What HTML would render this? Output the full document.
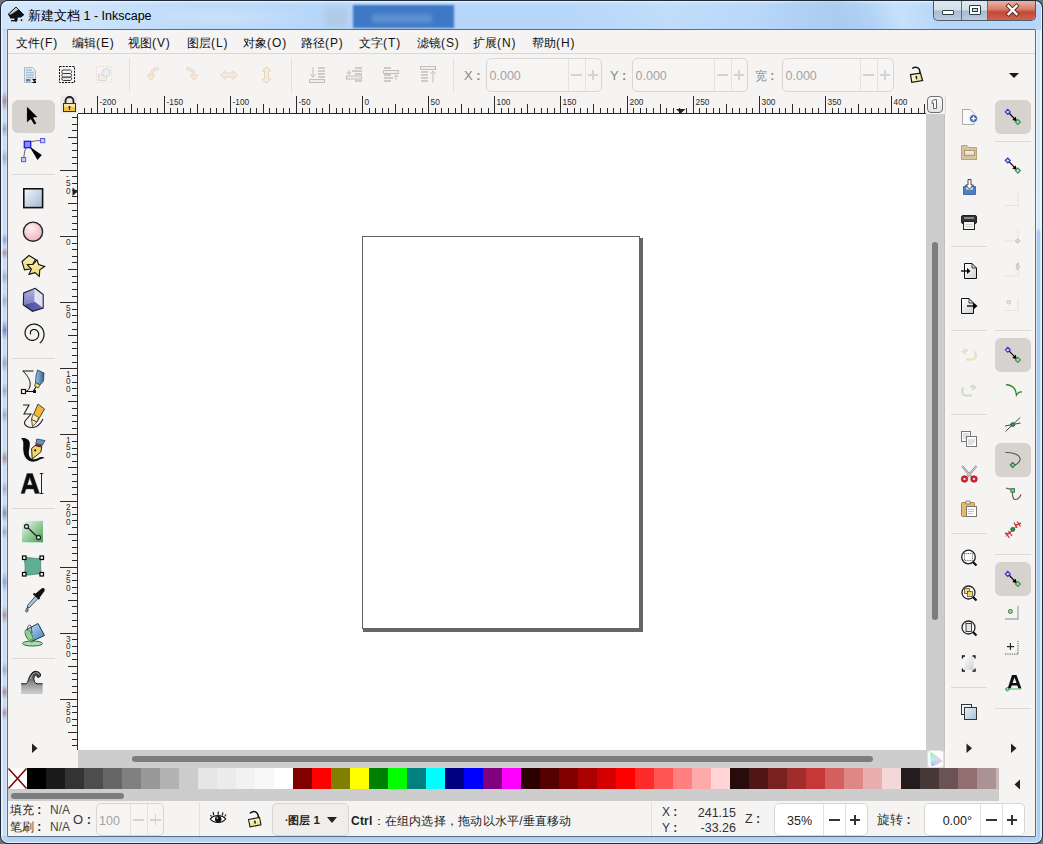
<!DOCTYPE html>
<html><head><meta charset="utf-8">
<style>
*{margin:0;padding:0;box-sizing:border-box}
html,body{width:1043px;height:844px;overflow:hidden;background:#fff;font-family:"Liberation Sans",sans-serif}
.a{position:absolute}
svg.a{overflow:visible}
.cjk{font-family:"Liberation Sans",sans-serif}
.sep{position:absolute;background:#e2e0dc}
.spin{position:absolute;border:1px solid #d9d7d3;border-radius:5px;background:#f6f5f4}
.spin .t{position:absolute;font-size:12.5px;color:#a3a3a3;white-space:nowrap}
.spin .d{position:absolute;top:0;bottom:0;width:1px;background:#e4e2df}
.spin .mi{position:absolute;height:2px;width:11px;background:#d4d4d4}
.lbl{position:absolute;font-size:13px;color:#888;white-space:nowrap}
.menu{position:absolute;top:34.5px;font-size:12px;color:#111;white-space:nowrap;letter-spacing:0}
.btnsel{position:absolute;background:#d6d2ce;border-radius:6px}
.tri{position:absolute;width:0;height:0}

</style></head><body>
<div class="a" style="left:0;top:0;width:1043px;height:844px;background:#6d7680"></div>
<div class="a" style="left:0;top:0;width:1043px;height:844px;border-radius:8px;background:#1f2a36"></div>
<div class="a" style="left:1px;top:1px;width:1041px;height:842px;border-radius:7px;background:#e6f2fd"></div>
<div class="a" style="left:2px;top:2px;width:1039px;height:840px;border-radius:6px;background:linear-gradient(180deg,#c8e2fc 0px,#b7d7fa 3px,#b5d5f9 28px,#b9d6f6 200px,#b3d0f0 500px,#b6d4f6 844px)"></div>
<!-- title streaks -->
<div class="a" style="left:1px;top:1px;width:200px;height:28px;border-radius:7px 0 0 0;background:linear-gradient(90deg,rgba(230,242,253,.6) 0,rgba(230,242,253,.45) 50%,rgba(230,242,253,0) 100%)"></div>
<div class="a" style="left:120px;top:1px;width:200px;height:28px;background:radial-gradient(ellipse at 50% 60%,rgba(220,235,250,.55),rgba(220,235,250,0) 70%)"></div>
<div class="a" style="left:760px;top:1px;width:175px;height:28px;background:linear-gradient(70deg,rgba(200,225,250,0) 0%,rgba(160,195,232,.55) 45%,rgba(160,195,232,.2) 62%,rgba(215,235,252,.5) 78%,rgba(200,225,250,0) 100%)"></div>
<div class="a" style="left:560px;top:1px;width:220px;height:28px;background:linear-gradient(90deg,rgba(210,232,252,0),rgba(210,232,252,.35) 50%,rgba(210,232,252,0))"></div>
<div class="a" style="left:353px;top:5px;width:101px;height:23px;background:#3f78c6;filter:blur(1.2px)"></div>
<div class="a" style="left:372px;top:14px;width:60px;height:9px;background:rgba(120,165,220,.55);filter:blur(2px)"></div>
<div class="a" style="left:325px;top:8px;width:22px;height:18px;background:rgba(170,190,210,.5);filter:blur(3px)"></div>
<!-- left frame streaks -->
<div class="a" style="left:2px;top:30px;width:5px;height:806px;background:linear-gradient(180deg,#c6ddf5 0px,#c6ddf5 61px,#a38fa8 71px,#c6ddf5 81px,#c6ddf5 91px,#98aac4 99px,#c6ddf5 107px,#c6ddf5 119px,#9fb3cf 128px,#c6ddf5 137px,#c6ddf5 203px,#8fa9dc 210px,#c6ddf5 217px,#c6ddf5 217px,#a896b0 223px,#c6ddf5 229px,#c6ddf5 239px,#a0b2c8 247px,#c6ddf5 255px,#c6ddf5 263px,#a3b5cc 271px,#c6ddf5 279px,#c6ddf5 290px,#7b88cc 300px,#c6ddf5 310px,#c6ddf5 324px,#98abc8 333px,#c6ddf5 342px,#c6ddf5 353px,#9fb1c6 361px,#c6ddf5 369px,#c6ddf5 377px,#9aaed0 385px,#c6ddf5 393px,#c6ddf5 420px,#a994a8 428px,#c6ddf5 436px,#c6ddf5 451px,#a3b4c8 459px,#c6ddf5 467px,#c6ddf5 474px,#8797b0 483px,#c6ddf5 492px,#c6ddf5 495px,#9fb0c6 502px,#c6ddf5 509px,#c6ddf5 542px,#8ea4dc 552px,#c6ddf5 562px,#c6ddf5 576px,#a898b0 585px,#c6ddf5 594px,#c6ddf5 632px,#9db0cc 640px,#c6ddf5 648px,#c6ddf5 655px,#a48ea8 662px,#c6ddf5 669px,#c6ddf5 676px,#a898b4 683px,#c6ddf5 690px,#c6ddf5 806px)"></div>
<div class="a" style="left:2px;top:30px;width:1px;height:806px;background:rgba(255,255,255,.45)"></div>
<div class="a" style="left:6px;top:30px;width:1px;height:806px;background:rgba(255,255,255,.35)"></div>
<div class="a" style="left:1036px;top:30px;width:5px;height:806px;background:linear-gradient(180deg,#d6e8f9 0,#d8e9f9 198px,#abcbee 202px,#aecdef 100%)"></div>
<div class="a" style="left:1036px;top:30px;width:1px;height:806px;background:rgba(255,255,255,.5)"></div>
<div class="a" style="left:1040px;top:30px;width:1px;height:806px;background:rgba(255,255,255,.55)"></div>
<div class="a" style="left:8px;top:837px;width:1027px;height:5px;background:linear-gradient(180deg,#a8cdf5,#b9d8f8)"></div>
<!-- client border -->
<div class="a" style="left:7px;top:29px;width:1029px;height:808px;border:1px solid #5d6f82;border-radius:1px"></div>
<div class="a" style="left:8px;top:30px;width:1027px;height:806px;background:#f5f4f3"></div>
<!-- title icon -->
<svg class="a" style="left:0;top:0" width="30" height="30" viewBox="0 0 30 30">
<path d="M8 14.5 L16 7 L24 15 L21 17.5 L10 17.5 Z" fill="#111"/>
<path d="M8.5 14.2 L16 7.2 L18.5 9.6 L14 12.5 L11 14.5 Z" fill="#e8e8e8" opacity="0.85"/>
<path d="M8 14.5 L16 7 L24 15" fill="none" stroke="#000" stroke-width="0.8"/>
<path d="M14 15 L18 15 L17.5 20 C17 22.5 15 22.5 14.5 20 Z" fill="#111"/>
<rect x="10" y="17" width="5" height="1.5" fill="#111"/>
<rect x="11" y="20" width="4" height="1.3" fill="#111"/>
<circle cx="21.5" cy="20.2" r="0.9" fill="#111"/>
</svg>
<div class="a cjk" style="left:28px;top:8px;font-size:12.5px;color:#000;white-space:nowrap">新建文档 1 - Inkscape</div>
<!-- caption buttons -->
<div class="a" style="left:933px;top:1px;width:103px;height:20px;border:1px solid #4d5b6a;border-top:none;border-radius:0 0 5px 5px;background:linear-gradient(180deg,#dfe8f1 0,#d3dfeb 45%,#a9bcd0 55%,#bccbdc 100%);overflow:hidden">
 <div class="a" style="left:27px;top:0;width:1px;height:20px;background:#5c6b7b"></div>
 <div class="a" style="left:53px;top:0;width:1px;height:20px;background:#5c6b7b"></div>
 <div class="a" style="left:54px;top:0;width:48px;height:20px;background:linear-gradient(180deg,#eab3a6 0,#d8816f 40%,#c44a35 55%,#d26550 100%)"></div>
</div>
<div class="a" style="left:942px;top:10px;width:12px;height:5px;background:#fff;border:1px solid #2d3a48;border-radius:1px"></div>
<div class="a" style="left:969px;top:5px;width:12px;height:10px;background:#fff;border:1px solid #2d3a48;border-radius:1px"></div>
<div class="a" style="left:972px;top:8px;width:6px;height:4px;background:#c9d6e3;border:1px solid #2d3a48"></div>
<svg class="a" style="left:1005px;top:4px" width="15" height="12" viewBox="0 0 15 12"><path d="M3.5 2 L11.5 10 M11.5 2 L3.5 10" stroke="#5a2a22" stroke-width="4.2" stroke-linecap="square"/><path d="M3.5 2 L11.5 10 M11.5 2 L3.5 10" stroke="#fff" stroke-width="2.4" stroke-linecap="square"/></svg>
<div class="menu cjk" style="left:16px">文件<span style="letter-spacing:0.9px">(F)</span></div>
<div class="menu cjk" style="left:72px">编辑<span style="letter-spacing:0.9px">(E)</span></div>
<div class="menu cjk" style="left:128px">视图<span style="letter-spacing:0.9px">(V)</span></div>
<div class="menu cjk" style="left:187px">图层<span style="letter-spacing:0.9px">(L)</span></div>
<div class="menu cjk" style="left:243px">对象<span style="letter-spacing:0.9px">(O)</span></div>
<div class="menu cjk" style="left:301px">路径<span style="letter-spacing:0.9px">(P)</span></div>
<div class="menu cjk" style="left:359px">文字<span style="letter-spacing:0.9px">(T)</span></div>
<div class="menu cjk" style="left:417px">滤镜<span style="letter-spacing:0.9px">(S)</span></div>
<div class="menu cjk" style="left:473px">扩展<span style="letter-spacing:0.9px">(N)</span></div>
<div class="menu cjk" style="left:532px">帮助<span style="letter-spacing:0.9px">(H)</span></div>
<div class="sep" style="left:8px;top:53px;width:1027px;height:1px;background:#dad8d4"></div>
<!-- toolbar icons -->
<svg class="a" style="left:24px;top:66px" width="14" height="18" viewBox="0 0 14 18">
<path d="M0.5 1.5 L8.5 1.5 L11.5 4.5 L11.5 16.5 L0.5 16.5 Z" fill="#e6ecf4" stroke="#a8b8cc"/>
<path d="M2 4h6 M2 6.5h8 M2 9h8 M2 11.5h8" stroke="#a9bedb" stroke-width="1.3"/>
<rect x="2" y="13" width="4.5" height="2.5" fill="#6f7d8d"/>
<path d="M8.5 13.5 h3.5 M8.5 16.5 h3.5 M9.5 14 L11.5 16" stroke="#000" stroke-width="1.2"/>
</svg>
<svg class="a" style="left:59px;top:66px" width="17" height="18" viewBox="0 0 17 18">
<rect x="0.5" y="0.5" width="15" height="16" fill="none" stroke="#000" stroke-dasharray="2 1.2"/>
<path d="M3.5 11 L10.5 11 C12.5 11 13 12.5 12.5 13.5 L11.5 14.5 L4.5 14.5 C3 14.5 2.5 13 3 12 Z" fill="#e8e8e8" stroke="#222" stroke-width="0.9"/>
<path d="M3.5 7.5 L10.5 7.5 C12.5 7.5 13 9 12.5 10 L11.5 11 L4.5 11 C3 11 2.5 9.5 3 8.5 Z" fill="#f2f2f2" stroke="#222" stroke-width="0.9"/>
<path d="M3.5 4 L10.5 4 C12.5 4 13 5.5 12.5 6.5 L11.5 7.5 L4.5 7.5 C3 7.5 2.5 6 3 5 Z" fill="#fafafa" stroke="#222" stroke-width="0.9"/>
</svg>
<svg class="a" style="left:96px;top:66px" width="17" height="18" viewBox="0 0 17 18" opacity="0.35">
<rect x="0.5" y="0.5" width="15" height="16" fill="none" stroke="#e39a9a" stroke-dasharray="1.5 1.5"/>
<rect x="2.5" y="8.5" width="8" height="6" fill="#f0e2b0" stroke="#aaa"/>
<circle cx="10" cy="6.5" r="4" fill="#dce8f0" stroke="#999"/>
</svg>
<div class="sep" style="left:129px;top:58px;width:1px;height:34px"></div>
<svg class="a" style="left:146px;top:67px" width="15" height="15" viewBox="0 0 15 15" opacity="0.4">
<path d="M13 1.5 C7 1.5 5 5 5 9" stroke="#d9a46f" stroke-width="3" fill="none"/>
<path d="M13 1.5 C7 1.5 5 5 5 9" stroke="#fbeee0" stroke-width="1.2" fill="none"/>
<path d="M1 8 L9 8 L5 13.5 Z" fill="#f3dcc4" stroke="#d9a46f" stroke-width="0.9"/>
</svg>
<svg class="a" style="left:184px;top:67px" width="15" height="15" viewBox="0 0 15 15" opacity="0.4">
<path d="M2 1.5 C8 1.5 10 5 10 9" stroke="#d9a46f" stroke-width="3" fill="none"/>
<path d="M2 1.5 C8 1.5 10 5 10 9" stroke="#fbeee0" stroke-width="1.2" fill="none"/>
<path d="M14 8 L6 8 L10 13.5 Z" fill="#f3dcc4" stroke="#d9a46f" stroke-width="0.9"/>
</svg>
<svg class="a" style="left:220px;top:70px" width="19" height="10" viewBox="0 0 19 10" opacity="0.4">
<path d="M0.5 5 L5 0.5 L5 3 L13 3 L13 0.5 L17.5 5 L13 9.5 L13 7 L5 7 L5 9.5 Z" fill="#f3dcc4" stroke="#d9a46f"/>
</svg>
<svg class="a" style="left:261px;top:66px" width="11" height="18" viewBox="0 0 11 18" opacity="0.4">
<path d="M5.5 0.5 L10 5 L7.5 5 L7.5 13 L10 13 L5.5 17.5 L1 13 L3.5 13 L3.5 5 L1 5 Z" fill="#f3dcc4" stroke="#d9a46f"/>
</svg>
<div class="sep" style="left:291px;top:58px;width:1px;height:34px"></div>
<svg class="a" style="left:309px;top:66px" width="17" height="17" viewBox="0 0 17 17" opacity="0.42">
<path d="M4 1 V10" stroke="#777" stroke-width="1"/><path d="M1.5 8 L4 11.5 L6.5 8" stroke="#777" fill="none"/>
<path d="M9 2h7 M9 5h7 M9 8h7 M9 11h7" stroke="#777" stroke-width="1.6"/>
<rect x="0.5" y="13.5" width="15" height="3" fill="#eee8c8" stroke="#777"/>
</svg>
<svg class="a" style="left:346px;top:66px" width="17" height="17" viewBox="0 0 17 17" opacity="0.42">
<path d="M9 2h7 M6 5h10 M9 8h7 M9 15h7" stroke="#777" stroke-width="1.6"/>
<path d="M3 4 V8" stroke="#777"/><path d="M1 6 L3 8.5 L5 6" stroke="#777" fill="none"/>
<rect x="0.5" y="10" width="15" height="3" fill="#eee8c8" stroke="#777"/>
</svg>
<svg class="a" style="left:383px;top:66px" width="17" height="17" viewBox="0 0 17 17" opacity="0.42">
<path d="M1 2h7 M1 9h7 M1 12h9 M1 15h7" stroke="#777" stroke-width="1.6"/>
<rect x="0.5" y="4.5" width="15" height="3" fill="#eee8c8" stroke="#777"/>
<path d="M13 14 V9" stroke="#777"/><path d="M11 11 L13 8.5 L15 11" stroke="#777" fill="none"/>
</svg>
<svg class="a" style="left:420px;top:66px" width="17" height="17" viewBox="0 0 17 17" opacity="0.42">
<rect x="0.5" y="0.5" width="15" height="3" fill="#eee8c8" stroke="#777"/>
<path d="M1 6h7 M1 9h7 M1 12h7 M1 15h7" stroke="#777" stroke-width="1.6"/>
<path d="M13 16.5 V6" stroke="#777"/><path d="M10.5 8 L13 5 L15.5 8" stroke="#777" fill="none"/>
</svg>
<div class="sep" style="left:453px;top:58px;width:1px;height:34px"></div>
<div class="lbl" style="left:464px;top:68px">X <b>:</b></div>
<div class="spin" style="left:486px;top:58px;width:116px;height:34px"><div class="t" style="left:2.5px;top:10px">0.000</div><div class="d" style="left:81px"></div><div class="d" style="left:98px"></div><div class="mi" style="left:84px;top:15px;width:11px;height:2px"></div><div class="mi" style="left:101px;top:15px;width:10px;height:2px"></div><div class="mi" style="left:105px;top:11px;width:2px;height:10px"></div></div>
<div class="lbl" style="left:610px;top:68px">Y <b>:</b></div>
<div class="spin" style="left:632px;top:58px;width:116px;height:34px"><div class="t" style="left:2.5px;top:10px">0.000</div><div class="d" style="left:81px"></div><div class="d" style="left:98px"></div><div class="mi" style="left:84px;top:15px;width:11px;height:2px"></div><div class="mi" style="left:101px;top:15px;width:10px;height:2px"></div><div class="mi" style="left:105px;top:11px;width:2px;height:10px"></div></div>
<div class="lbl cjk" style="left:755px;top:68px;font-size:12px">宽 <b style="font-weight:bold">:</b></div>
<div class="spin" style="left:782px;top:58px;width:112px;height:34px"><div class="t" style="left:2.5px;top:10px">0.000</div><div class="d" style="left:77px"></div><div class="d" style="left:94px"></div><div class="mi" style="left:80px;top:15px;width:11px;height:2px"></div><div class="mi" style="left:97px;top:15px;width:10px;height:2px"></div><div class="mi" style="left:101px;top:11px;width:2px;height:10px"></div></div>
<svg class="a" style="left:0;top:0" width="1043" height="100" viewBox="0 0 1043 100">
<defs><linearGradient id="gLk" x1="0" y1="0" x2="1" y2="0"><stop offset="0" stop-color="#fbf8e0"/><stop offset="1" stop-color="#ecdf78"/></linearGradient></defs>
<path d="M912.3 68.6 C913.5 67 917 66.6 918.8 68.5 C920 69.8 920 72 920.2 74" stroke="#111" stroke-width="1.5" fill="none"/>
<path d="M910.5 74.6 L920.5 73.2 L922.6 80.6 L911.8 82.4 Z" fill="url(#gLk)" stroke="#111" stroke-width="1.2"/>
<circle cx="916.3" cy="77" r="1" fill="#111"/><path d="M916.4 77.3 L916.8 79.3" stroke="#111" stroke-width="1.1"/>
</svg>
<div class="tri" style="left:1009px;top:73px;border-left:5px solid transparent;border-right:5px solid transparent;border-top:5px solid #1a1a1a"></div>
<div class="a" style="left:78px;top:114px;width:848px;height:636px;background:#fff"></div>
<!-- page -->
<div class="a" style="left:362px;top:236px;width:278px;height:393px;border:1px solid #636363;background:#fff"></div>
<div class="a" style="left:640px;top:238px;width:3px;height:394px;background:#676767"></div>
<div class="a" style="left:363px;top:629px;width:280px;height:3px;background:#676767"></div>
<!-- v scrollbar -->
<div class="a" style="left:926px;top:114px;width:19px;height:636px;background:#cdcdcd"></div>
<div class="a" style="left:944px;top:114px;width:1px;height:636px;background:#c3c1bd"></div>
<div class="a" style="left:945px;top:96px;width:4px;height:672px;background:#f8f7f4"></div>
<div class="a" style="left:932px;top:242px;width:6px;height:378px;background:#7b7e7e;border-radius:3px"></div>
<!-- h scrollbar -->
<div class="a" style="left:78px;top:750px;width:848px;height:18px;background:#cdcdcd"></div>
<div class="a" style="left:132px;top:756px;width:741px;height:6px;background:#7b7e7e;border-radius:3px"></div>
<div class="a" style="left:926px;top:750px;width:19px;height:18px;background:#cdcdcd"></div>
<div class="a" style="left:927px;top:750px;width:17px;height:18px;background:#fcfcfc;border-radius:4px;box-shadow:inset 0 0 0 1px #e2dcdc"></div>
<svg class="a" style="left:927px;top:750px" width="17" height="18" viewBox="0 0 17 18">
<defs><linearGradient id="gCM" x1="0" y1="0" x2="1" y2="1"><stop offset="0" stop-color="#9be6a0"/><stop offset="0.5" stop-color="#b9c8f0"/><stop offset="1" stop-color="#f0b0d0"/></linearGradient></defs>
<defs><linearGradient id="gCM2" x1="0" y1="0" x2="0" y2="1"><stop offset="0" stop-color="#a8f0b0"/><stop offset="0.55" stop-color="#b8eef0"/><stop offset="1" stop-color="#a9b4f4"/></linearGradient><linearGradient id="gCM3" x1="0" y1="0" x2="1" y2="0"><stop offset="0.3" stop-color="#ffc0e8" stop-opacity="0"/><stop offset="1" stop-color="#ffb8d8" stop-opacity="1"/></linearGradient></defs><path d="M3 2.5 C3.5 2 4.5 2 5 2.5 L15 10.5 C15.5 11 15.3 11.6 14.8 11.8 L6 16 C5 16.4 4 16 4 15 Z" fill="url(#gCM2)"/><path d="M3 2.5 C3.5 2 4.5 2 5 2.5 L15 10.5 C15.5 11 15.3 11.6 14.8 11.8 L6 16 C5 16.4 4 16 4 15 Z" fill="url(#gCM3)"/>
</svg>
<!-- ruler corner lock -->
<div class="a" style="left:61px;top:96px;width:16px;height:17px;background:#ebe9e6;border-radius:3px;box-shadow:0 0 1px #ccc"></div>
<svg class="a" style="left:62px;top:96px" width="15" height="17" viewBox="0 0 15 17">
<path d="M3.5 8 V5 A4 4 0 0 1 11.5 5 V8" stroke="#222" stroke-width="1.8" fill="none"/>
<rect x="1.5" y="7.5" width="12" height="8" fill="#f3c445" stroke="#333" stroke-width="1"/>
<rect x="2" y="8" width="11" height="3" fill="#fbe79c"/>
<circle cx="7.5" cy="11" r="1.1" fill="#222"/><rect x="7" y="11" width="1" height="3" fill="#222"/>
</svg>
<!-- page num button at ruler end -->
<div class="a" style="left:927px;top:96px;width:16px;height:17px;background:linear-gradient(180deg,#fafafa,#e4e4e4);border:1px solid #6f6f6f;border-radius:4px"></div>
<svg class="a" style="left:927px;top:96px" width="16" height="17" viewBox="0 0 16 17"><path d="M6.5 4 L9.5 3.5 L9.5 12.5 L6.5 12.5 L6.5 7 L5 7.5 L5 5 Z" fill="#fdfdfd" stroke="#666" stroke-width="1"/></svg>
<div class="a" style="left:945px;top:96px;width:1px;height:18px;background:#e0dedb"></div>
<svg class="a" style="left:0;top:0" width="1043" height="844" viewBox="0 0 1043 844" shape-rendering="crispEdges"><rect x="78" y="113" width="848" height="1" fill="#2a2a2a"/><rect x="84" y="108" width="1" height="5" fill="#2a2a2a"/><rect x="91" y="108" width="1" height="5" fill="#2a2a2a"/><rect x="97" y="96" width="1" height="17" fill="#2a2a2a"/><rect x="104" y="108" width="1" height="5" fill="#2a2a2a"/><rect x="111" y="108" width="1" height="5" fill="#2a2a2a"/><rect x="117" y="108" width="1" height="5" fill="#2a2a2a"/><rect x="124" y="108" width="1" height="5" fill="#2a2a2a"/><rect x="131" y="104" width="1" height="9" fill="#2a2a2a"/><rect x="137" y="108" width="1" height="5" fill="#2a2a2a"/><rect x="144" y="108" width="1" height="5" fill="#2a2a2a"/><rect x="150" y="108" width="1" height="5" fill="#2a2a2a"/><rect x="157" y="108" width="1" height="5" fill="#2a2a2a"/><rect x="164" y="96" width="1" height="17" fill="#2a2a2a"/><rect x="170" y="108" width="1" height="5" fill="#2a2a2a"/><rect x="177" y="108" width="1" height="5" fill="#2a2a2a"/><rect x="183" y="108" width="1" height="5" fill="#2a2a2a"/><rect x="190" y="108" width="1" height="5" fill="#2a2a2a"/><rect x="197" y="104" width="1" height="9" fill="#2a2a2a"/><rect x="203" y="108" width="1" height="5" fill="#2a2a2a"/><rect x="210" y="108" width="1" height="5" fill="#2a2a2a"/><rect x="216" y="108" width="1" height="5" fill="#2a2a2a"/><rect x="223" y="108" width="1" height="5" fill="#2a2a2a"/><rect x="230" y="96" width="1" height="17" fill="#2a2a2a"/><rect x="236" y="108" width="1" height="5" fill="#2a2a2a"/><rect x="243" y="108" width="1" height="5" fill="#2a2a2a"/><rect x="250" y="108" width="1" height="5" fill="#2a2a2a"/><rect x="256" y="108" width="1" height="5" fill="#2a2a2a"/><rect x="263" y="104" width="1" height="9" fill="#2a2a2a"/><rect x="269" y="108" width="1" height="5" fill="#2a2a2a"/><rect x="276" y="108" width="1" height="5" fill="#2a2a2a"/><rect x="283" y="108" width="1" height="5" fill="#2a2a2a"/><rect x="289" y="108" width="1" height="5" fill="#2a2a2a"/><rect x="296" y="96" width="1" height="17" fill="#2a2a2a"/><rect x="302" y="108" width="1" height="5" fill="#2a2a2a"/><rect x="309" y="108" width="1" height="5" fill="#2a2a2a"/><rect x="316" y="108" width="1" height="5" fill="#2a2a2a"/><rect x="322" y="108" width="1" height="5" fill="#2a2a2a"/><rect x="329" y="104" width="1" height="9" fill="#2a2a2a"/><rect x="336" y="108" width="1" height="5" fill="#2a2a2a"/><rect x="342" y="108" width="1" height="5" fill="#2a2a2a"/><rect x="349" y="108" width="1" height="5" fill="#2a2a2a"/><rect x="355" y="108" width="1" height="5" fill="#2a2a2a"/><rect x="362" y="96" width="1" height="17" fill="#2a2a2a"/><rect x="369" y="108" width="1" height="5" fill="#2a2a2a"/><rect x="375" y="108" width="1" height="5" fill="#2a2a2a"/><rect x="382" y="108" width="1" height="5" fill="#2a2a2a"/><rect x="388" y="108" width="1" height="5" fill="#2a2a2a"/><rect x="395" y="104" width="1" height="9" fill="#2a2a2a"/><rect x="402" y="108" width="1" height="5" fill="#2a2a2a"/><rect x="408" y="108" width="1" height="5" fill="#2a2a2a"/><rect x="415" y="108" width="1" height="5" fill="#2a2a2a"/><rect x="422" y="108" width="1" height="5" fill="#2a2a2a"/><rect x="428" y="96" width="1" height="17" fill="#2a2a2a"/><rect x="435" y="108" width="1" height="5" fill="#2a2a2a"/><rect x="441" y="108" width="1" height="5" fill="#2a2a2a"/><rect x="448" y="108" width="1" height="5" fill="#2a2a2a"/><rect x="455" y="108" width="1" height="5" fill="#2a2a2a"/><rect x="461" y="104" width="1" height="9" fill="#2a2a2a"/><rect x="468" y="108" width="1" height="5" fill="#2a2a2a"/><rect x="474" y="108" width="1" height="5" fill="#2a2a2a"/><rect x="481" y="108" width="1" height="5" fill="#2a2a2a"/><rect x="488" y="108" width="1" height="5" fill="#2a2a2a"/><rect x="494" y="96" width="1" height="17" fill="#2a2a2a"/><rect x="501" y="108" width="1" height="5" fill="#2a2a2a"/><rect x="508" y="108" width="1" height="5" fill="#2a2a2a"/><rect x="514" y="108" width="1" height="5" fill="#2a2a2a"/><rect x="521" y="108" width="1" height="5" fill="#2a2a2a"/><rect x="527" y="104" width="1" height="9" fill="#2a2a2a"/><rect x="534" y="108" width="1" height="5" fill="#2a2a2a"/><rect x="541" y="108" width="1" height="5" fill="#2a2a2a"/><rect x="547" y="108" width="1" height="5" fill="#2a2a2a"/><rect x="554" y="108" width="1" height="5" fill="#2a2a2a"/><rect x="560" y="96" width="1" height="17" fill="#2a2a2a"/><rect x="567" y="108" width="1" height="5" fill="#2a2a2a"/><rect x="574" y="108" width="1" height="5" fill="#2a2a2a"/><rect x="580" y="108" width="1" height="5" fill="#2a2a2a"/><rect x="587" y="108" width="1" height="5" fill="#2a2a2a"/><rect x="593" y="104" width="1" height="9" fill="#2a2a2a"/><rect x="600" y="108" width="1" height="5" fill="#2a2a2a"/><rect x="607" y="108" width="1" height="5" fill="#2a2a2a"/><rect x="613" y="108" width="1" height="5" fill="#2a2a2a"/><rect x="620" y="108" width="1" height="5" fill="#2a2a2a"/><rect x="627" y="96" width="1" height="17" fill="#2a2a2a"/><rect x="633" y="108" width="1" height="5" fill="#2a2a2a"/><rect x="640" y="108" width="1" height="5" fill="#2a2a2a"/><rect x="646" y="108" width="1" height="5" fill="#2a2a2a"/><rect x="653" y="108" width="1" height="5" fill="#2a2a2a"/><rect x="660" y="104" width="1" height="9" fill="#2a2a2a"/><rect x="666" y="108" width="1" height="5" fill="#2a2a2a"/><rect x="673" y="108" width="1" height="5" fill="#2a2a2a"/><rect x="679" y="108" width="1" height="5" fill="#2a2a2a"/><rect x="686" y="108" width="1" height="5" fill="#2a2a2a"/><rect x="693" y="96" width="1" height="17" fill="#2a2a2a"/><rect x="699" y="108" width="1" height="5" fill="#2a2a2a"/><rect x="706" y="108" width="1" height="5" fill="#2a2a2a"/><rect x="713" y="108" width="1" height="5" fill="#2a2a2a"/><rect x="719" y="108" width="1" height="5" fill="#2a2a2a"/><rect x="726" y="104" width="1" height="9" fill="#2a2a2a"/><rect x="732" y="108" width="1" height="5" fill="#2a2a2a"/><rect x="739" y="108" width="1" height="5" fill="#2a2a2a"/><rect x="746" y="108" width="1" height="5" fill="#2a2a2a"/><rect x="752" y="108" width="1" height="5" fill="#2a2a2a"/><rect x="759" y="96" width="1" height="17" fill="#2a2a2a"/><rect x="765" y="108" width="1" height="5" fill="#2a2a2a"/><rect x="772" y="108" width="1" height="5" fill="#2a2a2a"/><rect x="779" y="108" width="1" height="5" fill="#2a2a2a"/><rect x="785" y="108" width="1" height="5" fill="#2a2a2a"/><rect x="792" y="104" width="1" height="9" fill="#2a2a2a"/><rect x="799" y="108" width="1" height="5" fill="#2a2a2a"/><rect x="805" y="108" width="1" height="5" fill="#2a2a2a"/><rect x="812" y="108" width="1" height="5" fill="#2a2a2a"/><rect x="818" y="108" width="1" height="5" fill="#2a2a2a"/><rect x="825" y="96" width="1" height="17" fill="#2a2a2a"/><rect x="832" y="108" width="1" height="5" fill="#2a2a2a"/><rect x="838" y="108" width="1" height="5" fill="#2a2a2a"/><rect x="845" y="108" width="1" height="5" fill="#2a2a2a"/><rect x="851" y="108" width="1" height="5" fill="#2a2a2a"/><rect x="858" y="104" width="1" height="9" fill="#2a2a2a"/><rect x="865" y="108" width="1" height="5" fill="#2a2a2a"/><rect x="871" y="108" width="1" height="5" fill="#2a2a2a"/><rect x="878" y="108" width="1" height="5" fill="#2a2a2a"/><rect x="885" y="108" width="1" height="5" fill="#2a2a2a"/><rect x="891" y="96" width="1" height="17" fill="#2a2a2a"/><rect x="898" y="108" width="1" height="5" fill="#2a2a2a"/><rect x="904" y="108" width="1" height="5" fill="#2a2a2a"/><rect x="911" y="108" width="1" height="5" fill="#2a2a2a"/><rect x="918" y="108" width="1" height="5" fill="#2a2a2a"/><rect x="924" y="104" width="1" height="9" fill="#2a2a2a"/><rect x="77" y="114" width="1" height="636" fill="#2a2a2a"/><rect x="72" y="117" width="5" height="1" fill="#2a2a2a"/><rect x="72" y="124" width="5" height="1" fill="#2a2a2a"/><rect x="72" y="130" width="5" height="1" fill="#2a2a2a"/><rect x="68" y="137" width="9" height="1" fill="#2a2a2a"/><rect x="72" y="143" width="5" height="1" fill="#2a2a2a"/><rect x="72" y="150" width="5" height="1" fill="#2a2a2a"/><rect x="72" y="157" width="5" height="1" fill="#2a2a2a"/><rect x="72" y="163" width="5" height="1" fill="#2a2a2a"/><rect x="60" y="170" width="17" height="1" fill="#2a2a2a"/><rect x="72" y="176" width="5" height="1" fill="#2a2a2a"/><rect x="72" y="183" width="5" height="1" fill="#2a2a2a"/><rect x="72" y="190" width="5" height="1" fill="#2a2a2a"/><rect x="72" y="196" width="5" height="1" fill="#2a2a2a"/><rect x="68" y="203" width="9" height="1" fill="#2a2a2a"/><rect x="72" y="210" width="5" height="1" fill="#2a2a2a"/><rect x="72" y="216" width="5" height="1" fill="#2a2a2a"/><rect x="72" y="223" width="5" height="1" fill="#2a2a2a"/><rect x="72" y="229" width="5" height="1" fill="#2a2a2a"/><rect x="60" y="236" width="17" height="1" fill="#2a2a2a"/><rect x="72" y="243" width="5" height="1" fill="#2a2a2a"/><rect x="72" y="249" width="5" height="1" fill="#2a2a2a"/><rect x="72" y="256" width="5" height="1" fill="#2a2a2a"/><rect x="72" y="262" width="5" height="1" fill="#2a2a2a"/><rect x="68" y="269" width="9" height="1" fill="#2a2a2a"/><rect x="72" y="276" width="5" height="1" fill="#2a2a2a"/><rect x="72" y="282" width="5" height="1" fill="#2a2a2a"/><rect x="72" y="289" width="5" height="1" fill="#2a2a2a"/><rect x="72" y="296" width="5" height="1" fill="#2a2a2a"/><rect x="60" y="302" width="17" height="1" fill="#2a2a2a"/><rect x="72" y="309" width="5" height="1" fill="#2a2a2a"/><rect x="72" y="315" width="5" height="1" fill="#2a2a2a"/><rect x="72" y="322" width="5" height="1" fill="#2a2a2a"/><rect x="72" y="329" width="5" height="1" fill="#2a2a2a"/><rect x="68" y="335" width="9" height="1" fill="#2a2a2a"/><rect x="72" y="342" width="5" height="1" fill="#2a2a2a"/><rect x="72" y="348" width="5" height="1" fill="#2a2a2a"/><rect x="72" y="355" width="5" height="1" fill="#2a2a2a"/><rect x="72" y="362" width="5" height="1" fill="#2a2a2a"/><rect x="60" y="368" width="17" height="1" fill="#2a2a2a"/><rect x="72" y="375" width="5" height="1" fill="#2a2a2a"/><rect x="72" y="382" width="5" height="1" fill="#2a2a2a"/><rect x="72" y="388" width="5" height="1" fill="#2a2a2a"/><rect x="72" y="395" width="5" height="1" fill="#2a2a2a"/><rect x="68" y="401" width="9" height="1" fill="#2a2a2a"/><rect x="72" y="408" width="5" height="1" fill="#2a2a2a"/><rect x="72" y="415" width="5" height="1" fill="#2a2a2a"/><rect x="72" y="421" width="5" height="1" fill="#2a2a2a"/><rect x="72" y="428" width="5" height="1" fill="#2a2a2a"/><rect x="60" y="434" width="17" height="1" fill="#2a2a2a"/><rect x="72" y="441" width="5" height="1" fill="#2a2a2a"/><rect x="72" y="448" width="5" height="1" fill="#2a2a2a"/><rect x="72" y="454" width="5" height="1" fill="#2a2a2a"/><rect x="72" y="461" width="5" height="1" fill="#2a2a2a"/><rect x="68" y="467" width="9" height="1" fill="#2a2a2a"/><rect x="72" y="474" width="5" height="1" fill="#2a2a2a"/><rect x="72" y="481" width="5" height="1" fill="#2a2a2a"/><rect x="72" y="487" width="5" height="1" fill="#2a2a2a"/><rect x="72" y="494" width="5" height="1" fill="#2a2a2a"/><rect x="60" y="501" width="17" height="1" fill="#2a2a2a"/><rect x="72" y="507" width="5" height="1" fill="#2a2a2a"/><rect x="72" y="514" width="5" height="1" fill="#2a2a2a"/><rect x="72" y="520" width="5" height="1" fill="#2a2a2a"/><rect x="72" y="527" width="5" height="1" fill="#2a2a2a"/><rect x="68" y="534" width="9" height="1" fill="#2a2a2a"/><rect x="72" y="540" width="5" height="1" fill="#2a2a2a"/><rect x="72" y="547" width="5" height="1" fill="#2a2a2a"/><rect x="72" y="553" width="5" height="1" fill="#2a2a2a"/><rect x="72" y="560" width="5" height="1" fill="#2a2a2a"/><rect x="60" y="567" width="17" height="1" fill="#2a2a2a"/><rect x="72" y="573" width="5" height="1" fill="#2a2a2a"/><rect x="72" y="580" width="5" height="1" fill="#2a2a2a"/><rect x="72" y="587" width="5" height="1" fill="#2a2a2a"/><rect x="72" y="593" width="5" height="1" fill="#2a2a2a"/><rect x="68" y="600" width="9" height="1" fill="#2a2a2a"/><rect x="72" y="606" width="5" height="1" fill="#2a2a2a"/><rect x="72" y="613" width="5" height="1" fill="#2a2a2a"/><rect x="72" y="620" width="5" height="1" fill="#2a2a2a"/><rect x="72" y="626" width="5" height="1" fill="#2a2a2a"/><rect x="60" y="633" width="17" height="1" fill="#2a2a2a"/><rect x="72" y="639" width="5" height="1" fill="#2a2a2a"/><rect x="72" y="646" width="5" height="1" fill="#2a2a2a"/><rect x="72" y="653" width="5" height="1" fill="#2a2a2a"/><rect x="72" y="659" width="5" height="1" fill="#2a2a2a"/><rect x="68" y="666" width="9" height="1" fill="#2a2a2a"/><rect x="72" y="673" width="5" height="1" fill="#2a2a2a"/><rect x="72" y="679" width="5" height="1" fill="#2a2a2a"/><rect x="72" y="686" width="5" height="1" fill="#2a2a2a"/><rect x="72" y="692" width="5" height="1" fill="#2a2a2a"/><rect x="60" y="699" width="17" height="1" fill="#2a2a2a"/><rect x="72" y="706" width="5" height="1" fill="#2a2a2a"/><rect x="72" y="712" width="5" height="1" fill="#2a2a2a"/><rect x="72" y="719" width="5" height="1" fill="#2a2a2a"/><rect x="72" y="725" width="5" height="1" fill="#2a2a2a"/><rect x="68" y="732" width="9" height="1" fill="#2a2a2a"/><rect x="72" y="739" width="5" height="1" fill="#2a2a2a"/><rect x="72" y="745" width="5" height="1" fill="#2a2a2a"/><path d="M676 109 L685.5 109 L680.7 113.5 Z" fill="#222" shape-rendering="auto"/><path d="M72.5 187.5 L72.5 196 L77.5 191.8 Z" fill="#222" shape-rendering="auto"/></svg><svg class="a" style="left:0;top:0" width="1043" height="844" viewBox="0 0 1043 844" font-family="Liberation Sans"><text transform="translate(99.6,105.2) scale(0.88,1)" font-size="9.4" fill="#2a2a2a">-200</text><text transform="translate(166.6,105.2) scale(0.88,1)" font-size="9.4" fill="#2a2a2a">-150</text><text transform="translate(232.6,105.2) scale(0.88,1)" font-size="9.4" fill="#2a2a2a">-100</text><text transform="translate(298.6,105.2) scale(0.88,1)" font-size="9.4" fill="#2a2a2a">-50</text><text transform="translate(364.6,105.2) scale(0.88,1)" font-size="9.4" fill="#2a2a2a">0</text><text transform="translate(430.6,105.2) scale(0.88,1)" font-size="9.4" fill="#2a2a2a">50</text><text transform="translate(496.6,105.2) scale(0.88,1)" font-size="9.4" fill="#2a2a2a">100</text><text transform="translate(562.6,105.2) scale(0.88,1)" font-size="9.4" fill="#2a2a2a">150</text><text transform="translate(629.6,105.2) scale(0.88,1)" font-size="9.4" fill="#2a2a2a">200</text><text transform="translate(695.6,105.2) scale(0.88,1)" font-size="9.4" fill="#2a2a2a">250</text><text transform="translate(761.6,105.2) scale(0.88,1)" font-size="9.4" fill="#2a2a2a">300</text><text transform="translate(827.6,105.2) scale(0.88,1)" font-size="9.4" fill="#2a2a2a">350</text><text transform="translate(893.6,105.2) scale(0.88,1)" font-size="9.4" fill="#2a2a2a">400</text><text transform="translate(65.9,178.9) scale(0.88,1)" font-size="9.4" fill="#2a2a2a">-</text><text transform="translate(65.9,186.3) scale(0.88,1)" font-size="9.4" fill="#2a2a2a">5</text><text transform="translate(65.9,193.7) scale(0.88,1)" font-size="9.4" fill="#2a2a2a">0</text><text transform="translate(65.9,244.9) scale(0.88,1)" font-size="9.4" fill="#2a2a2a">0</text><text transform="translate(65.9,310.9) scale(0.88,1)" font-size="9.4" fill="#2a2a2a">5</text><text transform="translate(65.9,318.3) scale(0.88,1)" font-size="9.4" fill="#2a2a2a">0</text><text transform="translate(65.9,376.9) scale(0.88,1)" font-size="9.4" fill="#2a2a2a">1</text><text transform="translate(65.9,384.3) scale(0.88,1)" font-size="9.4" fill="#2a2a2a">0</text><text transform="translate(65.9,391.7) scale(0.88,1)" font-size="9.4" fill="#2a2a2a">0</text><text transform="translate(65.9,442.9) scale(0.88,1)" font-size="9.4" fill="#2a2a2a">1</text><text transform="translate(65.9,450.3) scale(0.88,1)" font-size="9.4" fill="#2a2a2a">5</text><text transform="translate(65.9,457.7) scale(0.88,1)" font-size="9.4" fill="#2a2a2a">0</text><text transform="translate(65.9,509.9) scale(0.88,1)" font-size="9.4" fill="#2a2a2a">2</text><text transform="translate(65.9,517.3) scale(0.88,1)" font-size="9.4" fill="#2a2a2a">0</text><text transform="translate(65.9,524.7) scale(0.88,1)" font-size="9.4" fill="#2a2a2a">0</text><text transform="translate(65.9,575.9) scale(0.88,1)" font-size="9.4" fill="#2a2a2a">2</text><text transform="translate(65.9,583.3) scale(0.88,1)" font-size="9.4" fill="#2a2a2a">5</text><text transform="translate(65.9,590.7) scale(0.88,1)" font-size="9.4" fill="#2a2a2a">0</text><text transform="translate(65.9,641.9) scale(0.88,1)" font-size="9.4" fill="#2a2a2a">3</text><text transform="translate(65.9,649.3) scale(0.88,1)" font-size="9.4" fill="#2a2a2a">0</text><text transform="translate(65.9,656.7) scale(0.88,1)" font-size="9.4" fill="#2a2a2a">0</text><text transform="translate(65.9,707.9) scale(0.88,1)" font-size="9.4" fill="#2a2a2a">3</text><text transform="translate(65.9,715.3) scale(0.88,1)" font-size="9.4" fill="#2a2a2a">5</text><text transform="translate(65.9,722.7) scale(0.88,1)" font-size="9.4" fill="#2a2a2a">0</text></svg><div class="btnsel" style="left:12px;top:100px;width:43px;height:33px"></div>
<svg class="a" style="left:0;top:0" width="60" height="844" viewBox="0 0 60 844">
<defs>
<linearGradient id="gRect" x1="0" y1="0" x2="1" y2="1"><stop offset="0" stop-color="#f4f8fc"/><stop offset="1" stop-color="#9fb7d3"/></linearGradient>
<radialGradient id="gCirc" cx="0.4" cy="0.3" r="0.8"><stop offset="0" stop-color="#fdf2f4"/><stop offset="1" stop-color="#f2a9b6"/></radialGradient>
<linearGradient id="gStar" x1="0" y1="0" x2="0" y2="1"><stop offset="0" stop-color="#fbf3b8"/><stop offset="1" stop-color="#eadb6a"/></linearGradient>
<linearGradient id="gGrad" x1="0" y1="0" x2="1" y2="1"><stop offset="0" stop-color="#f4faf4"/><stop offset="1" stop-color="#3da04e"/></linearGradient>
<linearGradient id="gBucket" x1="0" y1="0" x2="1" y2="1"><stop offset="0" stop-color="#cfe6f5"/><stop offset="1" stop-color="#3f7db8"/></linearGradient>
<linearGradient id="gWave" x1="0" y1="0" x2="0" y2="1"><stop offset="0" stop-color="#2a2a2a"/><stop offset="0.5" stop-color="#8c8c8c"/><stop offset="0.95" stop-color="#c9c9c9"/><stop offset="1" stop-color="#9a9a9a"/></linearGradient>
<linearGradient id="gNib" x1="0" y1="0" x2="1" y2="0"><stop offset="0" stop-color="#9cc6e6"/><stop offset="1" stop-color="#2f6493"/></linearGradient>
</defs>
<!-- selector arrow -->
<path d="M26.6 106 L38.2 117.5 L33.5 117.8 L36.8 123.5 L34 125 L30.8 119.5 L26.6 123 Z" fill="#000" stroke="#fff" stroke-width="0.6"/>
<!-- node tool -->
<path d="M27.5 144.5 Q29 140.5 42.5 140.5" stroke="#666" fill="none" stroke-width="1"/>
<path d="M27.5 144.5 Q24 150 23.5 159.5" stroke="#666" fill="none" stroke-width="1"/>
<rect x="24.3" y="141.3" width="6.4" height="6.4" fill="#8a8cf0" stroke="#1f1fd8" stroke-width="1.3"/>
<rect x="40.5" y="138.5" width="4.2" height="4.2" fill="#c7c8f8" stroke="#5b5be0" stroke-width="1"/>
<rect x="21.5" y="157.5" width="4.2" height="4.2" fill="#c7c8f8" stroke="#5b5be0" stroke-width="1"/>
<path d="M29.5 146.4 L41.8 155 L37.5 160.1 Z" fill="#000"/>
<rect x="12" y="174" width="43" height="1" fill="#dcdad6"/>
<!-- rect -->
<rect x="23.8" y="188.8" width="18.8" height="18.8" fill="url(#gRect)" stroke="#111" stroke-width="1.6"/>
<!-- circle -->
<circle cx="33" cy="231.7" r="9.6" fill="url(#gCirc)" stroke="#222" stroke-width="1.4"/>
<!-- star -->
<path d="M22 261.5 L29 255.5 L35.5 259.5 L30 269 L24.5 269.8 Z" fill="url(#gStar)" stroke="#111" stroke-width="1.1"/>
<path d="M36.9 259.8 L38.6 264.5 L44.7 266.5 L39.8 269.8 L39.3 276.3 L35 272.6 L29 274.4 L31.4 269 L27.3 264.8 L33.3 264.3 Z" fill="url(#gStar)" stroke="#111" stroke-width="1.1"/>
<!-- 3d box -->
<defs><linearGradient id="gBoxL" x1="0" y1="0" x2="0" y2="1"><stop offset="0" stop-color="#b4b4e2"/><stop offset="1" stop-color="#7c7cbc"/></linearGradient>
<linearGradient id="gBoxB" x1="0" y1="0" x2="1" y2="0"><stop offset="0" stop-color="#4a4a9a"/><stop offset="1" stop-color="#6a6ab4"/></linearGradient></defs>
<path d="M35 288.3 L43.2 294.6 L43.2 308 L32.6 311.3 L23.3 305 L23.7 292.9 Z" fill="#e2e2f7"/>
<path d="M35 288.3 L23.7 292.9 L23.3 305 L34.7 301.7 Z" fill="url(#gBoxL)"/>
<path d="M23.3 305 L32.6 311.3 L43.2 308 L34.7 301.7 Z" fill="url(#gBoxB)"/>
<path d="M35 288.3 L34.7 301.7" stroke="#f4f4fc" stroke-width="0.6"/>
<path d="M35 288.3 L43.2 294.6 L43.2 308 L32.6 311.3 L23.3 305 L23.7 292.9 Z" fill="none" stroke="#1c1c30" stroke-width="1.1"/>
<!-- spiral -->
<path d="M30.89 334.35 L30.76 334.16 L30.65 333.95 L30.55 333.72 L30.47 333.48 L30.42 333.23 L30.39 332.97 L30.38 332.70 L30.40 332.42 L30.45 332.14 L30.53 331.86 L30.63 331.58 L30.77 331.31 L30.93 331.04 L31.12 330.79 L31.34 330.55 L31.59 330.33 L31.86 330.13 L32.15 329.95 L32.46 329.79 L32.80 329.67 L33.15 329.57 L33.51 329.51 L33.89 329.47 L34.27 329.48 L34.66 329.52 L35.05 329.59 L35.44 329.71 L35.82 329.86 L36.19 330.05 L36.55 330.28 L36.89 330.54 L37.21 330.84 L37.51 331.17 L37.78 331.53 L38.02 331.92 L38.22 332.34 L38.39 332.78 L38.52 333.24 L38.61 333.72 L38.65 334.20 L38.65 334.70 L38.60 335.21 L38.51 335.71 L38.37 336.21 L38.18 336.70 L37.95 337.17 L37.67 337.63 L37.34 338.07 L36.97 338.48 L36.56 338.86 L36.12 339.21 L35.64 339.52 L35.12 339.79 L34.58 340.01 L34.01 340.18 L33.43 340.30 L32.82 340.37 L32.21 340.39 L31.59 340.35 L30.97 340.25 L30.36 340.10 L29.76 339.88 L29.17 339.62 L28.60 339.29 L28.06 338.92 L27.55 338.49 L27.07 338.01 L26.64 337.48 L26.25 336.92 L25.91 336.31 L25.63 335.67 L25.40 335.00 L25.23 334.31 L25.12 333.60 L25.07 332.87 L25.10 332.14 L25.18 331.40 L25.34 330.67 L25.56 329.95 L25.85 329.24 L26.21 328.56 L26.63 327.91 L27.11 327.29 L27.64 326.71 L28.24 326.18 L28.88 325.70 L29.57 325.28 L30.30 324.92 L31.07 324.62 L31.86 324.39 L32.69 324.23 L33.52 324.15 L34.37 324.14 L35.23 324.20 L36.08 324.35 L36.92 324.57 L37.75 324.87 L38.55 325.25 L39.32 325.69 L40.05 326.21 L40.73 326.80 L41.37 327.45 L41.95 328.17 L42.47 328.93 L42.92 329.75 L43.30 330.61 L43.60 331.50 L43.82 332.43 L43.96 333.38 L44.01 334.34 L43.98 335.31 L43.86 336.28 L43.65 337.25 L43.35 338.19 L42.97 339.12 L42.50 340.01 L41.95 340.86 L41.32 341.66 L40.62 342.41 L39.85 343.10" fill="none" stroke="#111" stroke-width="1.2"/>
<rect x="12" y="358" width="43" height="1" fill="#dcdad6"/>
<!-- bezier pen -->
<path d="M22.5 371 L33.5 371 M23 371 C28 376 31 381 30 386 C29.5 389 28 391 25 391.5 L36 391.5" stroke="#111" fill="none" stroke-width="1"/>
<rect x="21.5" y="389.5" width="4" height="4" fill="#fff" stroke="#111" stroke-width="1.2"/>
<rect x="33" y="390" width="3" height="3" fill="#111"/>
<path d="M37.5 370 L44 373 L43.5 381 L40 385 L35.5 382.5 L36 376 Z" fill="url(#gNib)" stroke="#1d3d5a" stroke-width="0.8"/>
<path d="M35.5 382.5 L40 385 L38.5 388 L34.5 386 Z" fill="#f2cf55" stroke="#333" stroke-width="0.7"/>
<path d="M36 387 L33.5 391" stroke="#222" stroke-width="1.2"/>
<!-- pencil -->
<path d="M23 405 L29 405 L24 414 L31 414 L25 421 C23 425 28 428 33 427.5 C38 427 41 423 43 419" stroke="#222" fill="none" stroke-width="1.1"/>
<path d="M38 404 L44.5 409 L37 422 L31.5 419.5 Z" fill="#f6b532" stroke="#333" stroke-width="0.9"/>
<path d="M33 414 L38.5 417.5 L37 422 L31.5 419.5 Z" fill="#fbf0c0" stroke="#333" stroke-width="0.7"/>
<path d="M31.5 419.5 L37 422 L32.5 426.5 Z" fill="#f8e8b0" stroke="#333" stroke-width="0.8"/>
<!-- calligraphy -->
<path d="M21 438.3 C25 437.5 29.5 439.5 29.8 443 C30.2 447 28.5 450 28.8 453.5 C29 457 31 459.3 34 459.3 C37 459.3 39 457 42 457 C43 457 44 457.5 44.5 458.3 C42.5 458 40.5 459 38 460.5 C35 462 31 462 28.5 460.5 C25.5 458.5 23.5 455 23.3 450 C23 445 24.5 441 21 438.3 Z" fill="#0a0a0a"/>
<path d="M36.8 439 L45 440.5 L42.5 445 L35.8 443.5 Z" fill="#5d9cc0" stroke="#1d2d40" stroke-width="0.7"/>
<path d="M35.8 443.5 L42.5 445 L41.8 447 L35 445.5 Z" fill="#9a2030"/>
<path d="M35 445.5 L41.8 447 L40.8 452 L32.2 459 L31.6 448.5 Z" fill="#f3d66a" stroke="#111" stroke-width="0.9"/>
<circle cx="35.2" cy="450.3" r="1.1" fill="#111"/>
<!-- text A -->
<path d="M27 473.5 L32.5 473.5 L39.5 493.5 L35 493.5 L33.5 489 L26 489 L24.5 493.5 L21 493.5 Z M27.3 485 L32.3 485 L29.8 477.5 Z" fill="#0c0c0c" stroke="#444" stroke-width="0.5"/>
<path d="M41.5 473.5 V493.5 M39.8 473.5 H43.3 M39.8 493.5 H43.3" stroke="#111" stroke-width="0.9"/>
<rect x="12" y="508" width="43" height="1" fill="#dcdad6"/>
<!-- gradient -->
<rect x="22" y="520.8" width="21" height="21.5" fill="url(#gGrad)"/>
<path d="M26.5 526.5 L37.5 537" stroke="#222" stroke-width="1.2"/>
<circle cx="26.5" cy="526.5" r="2" fill="#fff" stroke="#222" stroke-width="1.3"/>
<circle cx="38.5" cy="537.5" r="2" fill="#fff" stroke="#222" stroke-width="1.3"/>
<!-- mesh -->
<path d="M24 558 C30 556.5 36 560 41.5 557.5 C40 563 40.5 569 41.5 574.5 C36 572.5 30 576.5 24 574.5 C26 569 25 563 24 558 Z" fill="#5fae94" stroke="#2f6b5a" stroke-width="0.6"/>
<rect x="22.5" y="556" width="3.5" height="3.5" fill="#fff" stroke="#000" stroke-width="1.2"/>
<rect x="40" y="556" width="3.5" height="3.5" fill="#fff" stroke="#000" stroke-width="1.2"/>
<rect x="22.5" y="572.5" width="3.5" height="3.5" fill="#fff" stroke="#000" stroke-width="1.2"/>
<rect x="40" y="572.5" width="3.5" height="3.5" fill="#fff" stroke="#000" stroke-width="1.2"/>
<!-- dropper -->
<path d="M27 606 L36 595.5 L38.5 598 L29 608 Z" fill="#a9c6dd" stroke="#333" stroke-width="0.8"/>
<path d="M35 594 L41 589 C43 587 45.5 588.5 44.5 591 L39 598.5 Z" fill="#111"/>
<path d="M33.5 593.5 L39.5 599" stroke="#111" stroke-width="2"/>
<path d="M27.5 607 L26 609.5 C25 611 26 612.5 27 612 C28.5 611.5 28.5 609.5 27.5 607 Z" fill="#8a8fb5" stroke="#333" stroke-width="0.7"/>
<!-- bucket -->
<ellipse cx="32.5" cy="643.5" rx="10" ry="2.5" fill="#a9dcae" stroke="#2e6b3a" stroke-width="1"/>
<path d="M26 630 L38 623.5 L44.5 635.5 L32.5 641 Z" fill="url(#gBucket)" stroke="#1c3550" stroke-width="1"/>
<ellipse cx="29" cy="635.5" rx="3" ry="6.3" transform="rotate(-28 29 635.5)" fill="#8fd08f" stroke="#2e6b3a" stroke-width="0.9"/>
<path d="M27.5 630 C27 626 29.5 623.5 31 626 L32 633" stroke="#333" fill="none" stroke-width="0.8"/>
<path d="M31 639 L32 643" stroke="#5aa45e" stroke-width="1.5"/>
<rect x="12" y="658" width="43" height="1" fill="#dcdad6"/>
<!-- tweak wave -->
<path d="M21.2 683.8 L25.8 683.8 C27.5 683.8 28 680 29.5 677 C31 673.5 33 671.3 35.5 671.3 C38.5 671.3 40.5 673.2 40.5 675 C40.5 677 38.5 678 37.2 677 C36.5 676 37.3 675 37.3 675 C36 674.3 34.5 675.3 34 677.5 C33.5 680 34.5 683.2 37 683.8 L42.6 683.8 L42.6 693.5 L21.2 693.5 Z" fill="url(#gWave)"/>
<path d="M21.2 683.8 L25.8 683.8 C27.5 683.8 28 680 29.5 677 C31 673.5 33 671.3 35.5 671.3 C38.5 671.3 40.5 673.2 40.5 675 C40.5 677 38.5 678 37.2 677 C36.5 676 37.3 675 37.3 675 C36 674.3 34.5 675.3 34 677.5 C33.5 680 34.5 683.2 37 683.8 L42.6 683.8" fill="none" stroke="#111" stroke-width="1"/>
<path d="M30.5 679 C31.5 675.5 33 673.2 35.5 672.8 C37.5 672.6 39 673.5 39.2 674.8" fill="none" stroke="#fff" stroke-width="0.7" opacity="0.8"/>
<!-- expand arrow -->
<path d="M32 743.5 L37.5 748.2 L32 753 Z" fill="#222"/>
</svg>
<div class="btnsel" style="left:995px;top:100px;width:36px;height:34px"></div>
<div class="btnsel" style="left:995px;top:338px;width:36px;height:34px"></div>
<div class="btnsel" style="left:995px;top:443px;width:36px;height:34px"></div>
<div class="btnsel" style="left:995px;top:562px;width:36px;height:34px"></div>
<svg class="a" style="left:0;top:0" width="1043" height="844" viewBox="0 0 1043 844">
<defs>
<linearGradient id="gPage" x1="0" y1="0" x2="1" y2="1"><stop offset="0" stop-color="#ffffff"/><stop offset="1" stop-color="#d0d0d0"/></linearGradient>
<linearGradient id="gDup" x1="0" y1="0" x2="1" y2="1"><stop offset="0" stop-color="#e8f0f8"/><stop offset="1" stop-color="#a8c0d8"/></linearGradient>
<symbol id="snapA" viewBox="0 0 20 20">
</symbol>
</defs>
<g fill="#dcdad6">
<rect x="951" y="246" width="36" height="1"/><rect x="951" y="330" width="36" height="1"/><rect x="951" y="414" width="36" height="1"/>
<rect x="951" y="533" width="36" height="1"/><rect x="951" y="687" width="36" height="1"/>
<rect x="995" y="141" width="36" height="1"/><rect x="995" y="330" width="36" height="1"/><rect x="995" y="554" width="36" height="1"/><rect x="995" y="708" width="36" height="1"/>
</g>
<!-- new doc -->
<path d="M962.5 109.5 L970 109.5 L974 113.5 L974 124.5 L962.5 124.5 Z" fill="#fafafa" stroke="#aaa"/>
<circle cx="973.5" cy="118.5" r="4" fill="#2d5aa0" stroke="#fff" stroke-width="0.8"/>
<path d="M971.3 118.5 H975.7 M973.5 116.3 V120.7" stroke="#fff" stroke-width="1.4"/>
<!-- open -->
<path d="M961.5 145.5 L967 145.5 L968.5 147.5 L976.5 147.5 L976.5 159.5 L961.5 159.5 Z" fill="#d6c39f" stroke="#b9a27c"/>
<rect x="964.5" y="150.5" width="10" height="5" fill="#f3ecdd" stroke="#a08a64" stroke-width="0.8"/>
<path d="M961.5 154 L976.5 154" stroke="#c8b48e" stroke-width="0.6"/>
<!-- import/save arrow tray -->
<path d="M963.5 186.5 L963.5 194.5 L975.5 194.5 L975.5 186.5 Z" fill="#4e7fc4" stroke="#2e5a94" stroke-width="0.8"/>
<rect x="966" y="187.5" width="7" height="2" fill="#dfe9f6"/>
<path d="M968 179.5 L971 179.5 L971 185 L973.5 185 L969.5 189 L965.5 185 L968 185 Z" fill="#fff" stroke="#333" stroke-width="0.9"/>
<!-- print -->
<rect x="961.5" y="215.5" width="15" height="8" rx="1.5" fill="#333" stroke="#222"/>
<rect x="964" y="217" width="10" height="2" fill="#888"/>
<rect x="963.5" y="221.5" width="11" height="8" fill="#f4f4ee" stroke="#222"/>
<path d="M965.5 224.5 h7 M965.5 226.5 h7" stroke="#bbb" stroke-width="0.7"/>
<!-- import doc -->
<path d="M964.5 263.5 L972 263.5 L976.5 268 L976.5 278.5 L964.5 278.5 Z" fill="url(#gPage)" stroke="#111"/>
<path d="M972 263.5 L972 268 L976.5 268" fill="none" stroke="#111" stroke-width="0.8"/>
<path d="M961 271 L968 271" stroke="#000" stroke-width="1.3"/><path d="M967 268 L970.5 271 L967 274 Z" fill="#000"/>
<!-- export doc -->
<path d="M961.5 298.5 L969 298.5 L973.5 303 L973.5 313.5 L961.5 313.5 Z" fill="url(#gPage)" stroke="#111"/>
<path d="M969 298.5 L969 303 L973.5 303" fill="none" stroke="#111" stroke-width="0.8"/>
<path d="M967 306 L975 306" stroke="#000" stroke-width="1.3"/><path d="M974 303 L977.5 306 L974 309 Z" fill="#000"/>
<!-- undo faint -->
<g opacity="0.35">
<path d="M974 352 C976.5 352 977 359.5 972 359.5 L966 359.5" stroke="#d6c070" stroke-width="2.4" fill="none"/>
<path d="M968 350.5 H963.5" stroke="#d6c070" stroke-width="2.4"/>
<path d="M961 351.5 L966 348 L966 355 Z" fill="#d6c070"/>
</g>
<g opacity="0.35">
<path d="M964 388 C961.5 388 961 395.5 966 395.5 L972 395.5" stroke="#8fbf7a" stroke-width="2.4" fill="none"/>
<path d="M970 386.5 H974.5" stroke="#8fbf7a" stroke-width="2.4"/>
<path d="M977 387.5 L972 384 L972 391 Z" fill="#8fbf7a"/>
</g>
<!-- copy -->
<rect x="961.5" y="431.5" width="9" height="10" fill="#fff" stroke="#777"/>
<path d="M963 434h6 M963 436h6 M963 438h5" stroke="#999" stroke-width="0.6"/>
<rect x="966.5" y="436.5" width="10" height="10" fill="#fff" stroke="#777"/>
<path d="M968 440h7 M968 442h7 M968 444h5" stroke="#999" stroke-width="0.6"/>
<!-- cut -->
<path d="M962 466 L971.5 477 M976.5 466 L967 477" stroke="#888" stroke-width="2"/>
<path d="M962 466 L971.5 477 M976.5 466 L967 477" stroke="#eee" stroke-width="0.8"/>
<circle cx="964.5" cy="479" r="3.3" fill="#d7242a" stroke="#a01317" stroke-width="0.6"/><circle cx="964.5" cy="479" r="1.1" fill="#fff"/>
<circle cx="974" cy="479" r="3.3" fill="#d7242a" stroke="#a01317" stroke-width="0.6"/><circle cx="974" cy="479" r="1.1" fill="#fff"/>
<!-- paste -->
<rect x="961.5" y="502.5" width="13" height="14" rx="1" fill="#e8b868" stroke="#a57a30" stroke-width="0.9"/>
<rect x="965.5" y="501" width="5" height="3" rx="1" fill="#ddd" stroke="#666" stroke-width="0.7"/>
<rect x="966.5" y="506.5" width="10" height="10" fill="#fff" stroke="#777"/>
<path d="M968 509.5h6 M968 511.5h6 M968 513.5h5" stroke="#999" stroke-width="0.6"/>
<!-- zoom selection -->
<circle cx="968.5" cy="557" r="6.8" fill="#fff" stroke="#222" stroke-width="1.3"/>
<rect x="964.5" y="553.5" width="8" height="7" fill="#fff" stroke="#333" stroke-width="0.8" stroke-dasharray="1 0.8"/>
<path d="M973 562 L976.5 565.5" stroke="#111" stroke-width="2.2"/>
<!-- zoom drawing -->
<circle cx="968.5" cy="592.5" r="6.5" fill="#f6f6f6" stroke="#222" stroke-width="1.3"/>
<rect x="964.5" y="588.5" width="5" height="5" fill="#f2d56a" stroke="#444" stroke-width="0.7"/>
<rect x="967.5" y="591.5" width="5" height="5" fill="#f2d56a" stroke="#444" stroke-width="0.7"/>
<path d="M973 597 L976.5 600.5" stroke="#111" stroke-width="2.2"/>
<!-- zoom page -->
<circle cx="968.5" cy="627.5" r="6.5" fill="#f6f6f6" stroke="#222" stroke-width="1.3"/>
<rect x="966" y="623.5" width="5.5" height="8" fill="#e4e4e4" stroke="#333" stroke-width="0.9"/>
<path d="M973 632 L976.5 635.5" stroke="#111" stroke-width="2.2"/>
<!-- zoom page width -->
<rect x="964" y="656.5" width="9.5" height="13.5" fill="url(#gPage)"/>
<path d="M962.5 658.5 V656 H965 M972.5 656 H975 V658.5 M962.5 668.5 V671 H965 M975 668.5 V671 H972.5" stroke="#111" stroke-width="1.3" fill="none"/>
<!-- duplicate -->
<rect x="961.5" y="704.5" width="10" height="10" fill="#f0f4f8" stroke="#333"/>
<rect x="964.5" y="707.5" width="12" height="12" fill="url(#gDup)" stroke="#333"/>
<!-- snap icons -->
<g id="snp1">
<path d="M1009 113 L1015.5 119.8" stroke="#000" stroke-width="1.2"/><path d="M1017 121.3 L1012.3 120 L1015.6 116.8 Z" fill="#000"/>
<path d="M1005.3 111.9 L1007.8 109.4 L1010.3 111.9 L1007.8 114.4 Z" fill="#d0d0ff" stroke="#3232d0" stroke-width="1.1"/>
<path d="M1015.4 122 L1017.9 119.5 L1020.4 122 L1017.9 124.5 Z" fill="#b8e0c0" stroke="#3f8a52" stroke-width="1.1"/>
</g>
<use href="#snp1" x="0" y="48.6"/>
<use href="#snp1" x="0" y="237.9"/>
<use href="#snp1" x="0" y="462"/>
<g stroke="#d0d0d0" stroke-width="1.1" stroke-dasharray="1.5 1" fill="none" opacity="0.75">
<path d="M1005 205.5 H1018 V193"/>
<path d="M1005 241 H1018 V229"/>
<path d="M1005 276 H1018 V262"/>
<path d="M1005 310.5 H1018 V298"/>
</g>
<path d="M1015.5 241 L1017.7 238.8 L1019.9 241 L1017.7 243.2 Z" fill="#ddd" stroke="#bbb"/>
<path d="M1016 266.6 L1017.7 263 L1019.4 266.6 L1017.7 270 Z" fill="#ddd" stroke="#bbb"/>
<circle cx="1008.7" cy="302.2" r="1.8" fill="#e8e8e8" stroke="#bbb" stroke-width="0.8"/>
<!-- green curve -->
<path d="M1006 384.5 C1012 385 1016 388 1016.5 395 C1018 392.5 1020 391.5 1022 392" stroke="#2f8a2f" stroke-width="1.4" fill="none"/>
<!-- intersection -->
<path d="M1005.5 431.5 L1020.2 417.5 M1005 426 L1020.5 423" stroke="#444" stroke-width="1"/>
<circle cx="1012.7" cy="424.6" r="2" fill="#3a8a4e" stroke="#1e5e2e" stroke-width="0.8"/>
<!-- curve selected -->
<path d="M1005.5 452.5 C1013 452 1021 455 1020 460 C1019 463 1016 465 1013 465" stroke="#555" stroke-width="1.1" fill="none"/>
<path d="M1010.3 465 L1012.7 462.6 L1015.1 465 L1012.7 467.4 Z" fill="#a8d8b0" stroke="#2e7a40" stroke-width="1.2"/>
<!-- node with curve -->
<path d="M1006 488 L1012.7 490 C1012 495 1013 499.5 1015 499.5 C1018 499.5 1020 497 1021 494.5" stroke="#555" stroke-width="1.1" fill="none"/>
<rect x="1011" y="488.7" width="3.4" height="3.4" fill="#a8d8b0" stroke="#2e7a40" stroke-width="1.1"/>
<!-- red hash -->
<path d="M1006 536.5 L1020.2 522.3" stroke="#444" stroke-width="0.9"/>
<path d="M1005.5 532.5 L1009.5 538 M1008.5 531 L1012 536 M1014 522.5 L1017 528 M1017 521.5 L1020.5 526.5" stroke="#d22" stroke-width="1.2"/>
<path d="M1005 534 L1011 532.5 M1015 525 L1021 523.5" stroke="#d22" stroke-width="1.1"/>
<circle cx="1012.7" cy="529.4" r="2" fill="#3a8a4e" stroke="#1e5e2e" stroke-width="0.8"/>
<!-- small L with node -->
<path d="M1005 619 H1018 V605.7" stroke="#aaa" stroke-width="1.3" fill="none"/>
<circle cx="1010.4" cy="611.4" r="2" fill="#a8d8b0" stroke="#2e7a40" stroke-width="1"/>
<!-- plus dotted -->
<path d="M1007 646.6 H1014 M1010.4 643 V650" stroke="#222" stroke-width="1.1"/>
<path d="M1005 654.2 H1018 V641" stroke="#777" stroke-width="1.2" stroke-dasharray="1.3 1" fill="none"/>
<!-- snap text A -->
<path d="M1012 675 L1016.5 675 L1021.5 688.5 L1018.3 688.5 L1017.3 685.5 L1011.7 685.5 L1010.7 688.5 L1007.7 688.5 Z M1012.5 683 L1016.5 683 L1014.5 677.5 Z" fill="#111"/>
<path d="M1008 689 L1021 689" stroke="#6cc07a" stroke-width="1.2"/>
<path d="M1005.4 689.2 L1007.4 687.2 L1009.4 689.2 L1007.4 691.2 Z" fill="#a8d8b0" stroke="#2e7a40" stroke-width="1"/>
<!-- expand arrows -->
<path d="M966.5 743.5 L972 748.2 L966.5 753 Z" fill="#222"/>
<path d="M1011 743.5 L1016.5 748.2 L1011 753 Z" fill="#222"/>
<path d="M1020 779.5 L1014.5 784.5 L1020 789.5 Z" fill="#222"/>
</svg>
<div class="a" style="left:8px;top:768px;width:991px;height:33px;background:#cdcdcd"></div>
<div class="a" style="left:27px;top:768px;width:19px;height:21px;background:#000000"></div>
<div class="a" style="left:46px;top:768px;width:19px;height:21px;background:#1a1a1a"></div>
<div class="a" style="left:65px;top:768px;width:19px;height:21px;background:#333333"></div>
<div class="a" style="left:84px;top:768px;width:19px;height:21px;background:#4d4d4d"></div>
<div class="a" style="left:103px;top:768px;width:19px;height:21px;background:#666666"></div>
<div class="a" style="left:122px;top:768px;width:19px;height:21px;background:#808080"></div>
<div class="a" style="left:141px;top:768px;width:19px;height:21px;background:#999999"></div>
<div class="a" style="left:160px;top:768px;width:19px;height:21px;background:#b3b3b3"></div>
<div class="a" style="left:179px;top:768px;width:19px;height:21px;background:#cccccc"></div>
<div class="a" style="left:198px;top:768px;width:19px;height:21px;background:#e6e6e6"></div>
<div class="a" style="left:217px;top:768px;width:19px;height:21px;background:#ececec"></div>
<div class="a" style="left:236px;top:768px;width:19px;height:21px;background:#f2f2f2"></div>
<div class="a" style="left:255px;top:768px;width:19px;height:21px;background:#f8f8f8"></div>
<div class="a" style="left:274px;top:768px;width:19px;height:21px;background:#ffffff"></div>
<div class="a" style="left:293px;top:768px;width:19px;height:21px;background:#800000"></div>
<div class="a" style="left:312px;top:768px;width:19px;height:21px;background:#ff0000"></div>
<div class="a" style="left:331px;top:768px;width:19px;height:21px;background:#808000"></div>
<div class="a" style="left:350px;top:768px;width:19px;height:21px;background:#ffff00"></div>
<div class="a" style="left:369px;top:768px;width:19px;height:21px;background:#008000"></div>
<div class="a" style="left:388px;top:768px;width:19px;height:21px;background:#00ff00"></div>
<div class="a" style="left:407px;top:768px;width:19px;height:21px;background:#008080"></div>
<div class="a" style="left:426px;top:768px;width:19px;height:21px;background:#00ffff"></div>
<div class="a" style="left:445px;top:768px;width:19px;height:21px;background:#000080"></div>
<div class="a" style="left:464px;top:768px;width:19px;height:21px;background:#0000ff"></div>
<div class="a" style="left:483px;top:768px;width:19px;height:21px;background:#800080"></div>
<div class="a" style="left:502px;top:768px;width:19px;height:21px;background:#ff00ff"></div>
<div class="a" style="left:521px;top:768px;width:19px;height:21px;background:#2b0000"></div>
<div class="a" style="left:540px;top:768px;width:19px;height:21px;background:#550000"></div>
<div class="a" style="left:559px;top:768px;width:19px;height:21px;background:#800000"></div>
<div class="a" style="left:578px;top:768px;width:19px;height:21px;background:#aa0000"></div>
<div class="a" style="left:597px;top:768px;width:19px;height:21px;background:#d40000"></div>
<div class="a" style="left:616px;top:768px;width:19px;height:21px;background:#ff0000"></div>
<div class="a" style="left:635px;top:768px;width:19px;height:21px;background:#ff2a2a"></div>
<div class="a" style="left:654px;top:768px;width:19px;height:21px;background:#ff5555"></div>
<div class="a" style="left:673px;top:768px;width:19px;height:21px;background:#ff8080"></div>
<div class="a" style="left:692px;top:768px;width:19px;height:21px;background:#ffaaaa"></div>
<div class="a" style="left:711px;top:768px;width:19px;height:21px;background:#ffd5d5"></div>
<div class="a" style="left:730px;top:768px;width:19px;height:21px;background:#280b0b"></div>
<div class="a" style="left:749px;top:768px;width:19px;height:21px;background:#501616"></div>
<div class="a" style="left:768px;top:768px;width:19px;height:21px;background:#782121"></div>
<div class="a" style="left:787px;top:768px;width:19px;height:21px;background:#a02c2c"></div>
<div class="a" style="left:806px;top:768px;width:19px;height:21px;background:#c83737"></div>
<div class="a" style="left:825px;top:768px;width:19px;height:21px;background:#d35f5f"></div>
<div class="a" style="left:844px;top:768px;width:19px;height:21px;background:#de8787"></div>
<div class="a" style="left:863px;top:768px;width:19px;height:21px;background:#e9afaf"></div>
<div class="a" style="left:882px;top:768px;width:19px;height:21px;background:#f4d7d7"></div>
<div class="a" style="left:901px;top:768px;width:19px;height:21px;background:#241c1c"></div>
<div class="a" style="left:920px;top:768px;width:19px;height:21px;background:#483737"></div>
<div class="a" style="left:939px;top:768px;width:19px;height:21px;background:#6c5353"></div>
<div class="a" style="left:958px;top:768px;width:19px;height:21px;background:#916f6f"></div>
<div class="a" style="left:977px;top:768px;width:19px;height:21px;background:#ac9393"></div>
<div class="a" style="left:996px;top:768px;width:3px;height:21px;background:#c8b7b7"></div>
<div class="a" style="left:8px;top:768px;width:19px;height:21px;background:#fff"></div>
<svg class="a" style="left:8px;top:768px" width="19" height="21" viewBox="0 0 19 21"><path d="M0.5 0.5 L18.5 20.5 M18.5 0.5 L0.5 20.5" stroke="#7a0a0a" stroke-width="1.6"/></svg>
<div class="a" style="left:11px;top:793px;width:113px;height:6px;background:#7b7e7e;border-radius:3px"></div><div class="a cjk" style="left:10px;top:802px;font-size:12px;color:#222;white-space:nowrap">填充 <b>:</b></div>
<div class="a cjk" style="left:10px;top:818.5px;font-size:12px;color:#222;white-space:nowrap">笔刷 <b>:</b></div>
<div class="a" style="left:50px;top:803px;font-size:12px;color:#444;white-space:nowrap">N/A</div>
<div class="a" style="left:50px;top:820px;font-size:12px;color:#444;white-space:nowrap">N/A</div>
<div class="a" style="left:73px;top:812px;font-size:13px;color:#333;white-space:nowrap">O <b>:</b></div>
<div class="spin" style="left:96px;top:803px;width:68px;height:33px;background:#f6f5f4"><div class="t" style="left:2px;top:9.5px">100</div><div class="d" style="left:33px"></div><div class="d" style="left:50px"></div><div class="mi" style="left:36px;top:15px;width:11px"></div><div class="mi" style="left:53px;top:15px;width:11px"></div><div class="mi" style="left:58px;top:10px;width:1px;height:11px"></div></div>
<div class="sep" style="left:199px;top:802px;width:1px;height:34px;background:#e2e0dc"></div>
<svg class="a" style="left:0;top:0" width="1043" height="844" viewBox="0 0 1043 844">
<!-- eye -->
<path d="M210.3 819 C213.5 814.5 222.5 814.5 225.7 819 C222.5 823.5 213.5 823.5 210.3 819 Z" fill="#fff" stroke="#111" stroke-width="1.2"/>
<circle cx="218.2" cy="819.2" r="3.2" fill="#111"/><circle cx="217.2" cy="818" r="0.8" fill="#fff"/>
<path d="M211.5 816.5 L210.5 815 M213.8 815.3 L213 812 M218.2 814.8 V811.5 M222.3 815.3 L223 812.3 M224.7 816.5 L226 814.5" stroke="#111" stroke-width="1.1"/>
<!-- open lock -->
<path d="M250 813.5 C251 811.5 254.5 811 256.5 812.5 C258.5 814 258.5 816.5 258.5 818.5" stroke="#111" stroke-width="1.5" fill="none"/>
<path d="M248.5 819.5 L259.5 817.5 L261 824.8 L250 826.8 Z" fill="#f1e79a" stroke="#1a1a1a" stroke-width="1.1"/>
<path d="M249.5 820.5 L259 819 L259.5 821 L250 822.5 Z" fill="#fdf8d0" opacity="0.8"/>
<circle cx="254.8" cy="821.5" r="1" fill="#222"/><path d="M254.9 821.8 L255.3 823.8" stroke="#222" stroke-width="1.1"/>
</svg>
<div class="a" style="left:272px;top:803px;width:77px;height:33px;background:#efeeec;border:1px solid #d8d6d2;border-radius:5px"></div>
<div class="a cjk" style="left:285px;top:813.5px;font-size:10.5px;color:#222;white-space:nowrap;font-weight:bold">·图层 <span style="font-size:11.5px">1</span></div>
<div class="tri" style="left:327px;top:817px;border-left:5px solid transparent;border-right:5px solid transparent;border-top:6px solid #222"></div>
<div class="a cjk" style="left:351px;top:812.5px;font-size:12px;color:#222;white-space:nowrap;letter-spacing:0.22px"><b>Ctrl</b>：在组内选择，拖动以水平/垂直移动</div>
<div class="sep" style="left:651px;top:802px;width:1px;height:34px;background:#e2e0dc"></div>
<div class="a" style="left:662px;top:805px;font-size:12px;color:#333;white-space:nowrap">X <b>:</b></div>
<div class="a" style="left:662px;top:821px;font-size:12px;color:#333;white-space:nowrap">Y <b>:</b></div>
<div class="a" style="left:680px;top:805.5px;width:56px;text-align:right;font-size:12.5px;color:#333;white-space:nowrap">241.15</div>
<div class="a" style="left:680px;top:821px;width:56px;text-align:right;font-size:12.5px;color:#333;white-space:nowrap">-33.26</div>
<div class="a" style="left:745px;top:812px;font-size:12.5px;color:#333;white-space:nowrap">Z <b>:</b></div>
<div class="spin" style="left:774px;top:803px;width:94px;height:33px;background:#fff"><div class="t" style="left:12px;top:10px;color:#222">35%</div><div class="d" style="left:48px"></div><div class="d" style="left:70px"></div><div class="mi" style="left:54px;top:15px;width:11px;height:2px;background:#333"></div><div class="mi" style="left:74.5px;top:15px;width:10px;height:2px;background:#333"></div><div class="mi" style="left:78.5px;top:11px;width:2px;height:10px;background:#333"></div></div>
<div class="a cjk" style="left:877px;top:812px;font-size:12.5px;color:#333;white-space:nowrap">旋转 <b>:</b></div>
<div class="spin" style="left:924px;top:803px;width:101px;height:33px;background:#fff"><div class="t" style="left:0px;width:47px;text-align:right;top:9.5px;color:#222">0.00°</div><div class="d" style="left:55px"></div><div class="d" style="left:77px"></div><div class="mi" style="left:61px;top:15px;width:11px;height:2px;background:#333"></div><div class="mi" style="left:81.5px;top:15px;width:10px;height:2px;background:#333"></div><div class="mi" style="left:85.5px;top:11px;width:2px;height:10px;background:#333"></div></div>

</body></html>
